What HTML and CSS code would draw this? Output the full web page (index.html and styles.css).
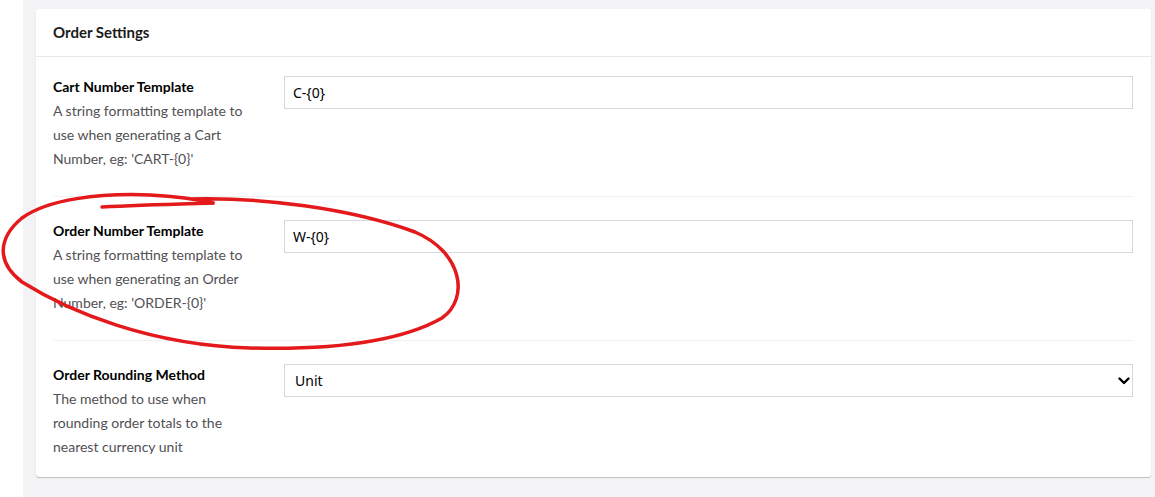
FILE: index.html
```html
<!DOCTYPE html>
<html lang="en">
<head>
    <meta charset="UTF-8">
    <meta name="viewport" content="width=device-width, initial-scale=1.0">
    <title>Order Settings</title>
    <link rel="stylesheet" href="styles.css">
</head>
<body>
    <div class="shell">
        <aside class="tree"></aside>
        <main class="editor">
            <div class="box">
                <div class="box-header">Order Settings</div>
                <div class="box-content">
                    <div class="property">
                        <div class="property-label">
                            <label for="cartNumber">Cart Number Template</label>
                            <p>A string formatting template to use when generating a Cart Number, eg: 'CART-{0}'</p>
                        </div>
                        <div class="property-editor">
                            <input type="text" id="cartNumber" value="C-{0}">
                        </div>
                    </div>

                    <div class="property">
                        <div class="property-label">
                            <label for="orderNumber">Order Number Template</label>
                            <p>A string formatting template to use when generating an Order Number, eg: 'ORDER-{0}'</p>
                        </div>
                        <div class="property-editor">
                            <input type="text" id="orderNumber" value="W-{0}">
                        </div>
                    </div>

                    <div class="property">
                        <div class="property-label">
                            <label for="rounding">Order Rounding Method</label>
                            <p>The method to use when rounding order totals to the nearest currency unit</p>
                        </div>
                        <div class="property-editor">
                            <div class="select-wrap">
                                <select id="rounding">
                                    <option selected>Unit</option>
                                    <option>Line</option>
                                    <option>Total</option>
                                </select>
                                <svg class="chevron" width="12" height="8" viewBox="0 0 12 8">
                                    <path d="M1.5 1.5 L6 6 L10.5 1.5" fill="none" stroke="#000" stroke-width="2.4" stroke-linecap="round" stroke-linejoin="round"/>
                                </svg>
                            </div>
                        </div>
                    </div>
                </div>
            </div>
        </main>
    </div>

    <!-- hand-drawn annotation over the second row -->
    <svg class="scribble" width="480" height="370" viewBox="0 0 480 370">
        <path d="M102 207 C140 205 180 204 213 203" />
        <path d="M190 199 C260 197 350 208 415 232 C462 252 470 298 442 318 C400 342 330 350 250 348 C150 345 70 312 22 282 C-4 262 -2 238 22 218 C48 199 100 193 150 195 C185 197 200 200 213 203" />
    </svg>
</body>
</html>
```

FILE: styles.css
```css
html, body {
    margin: 0;
    padding: 0;
}

body {
    font-family: "Lato", "Liberation Sans", sans-serif;
    font-size: 14px;
    color: #1b1b1b;
    background: #fff;
}

.shell {
    display: flex;
    min-height: 497px;
}

.tree {
    width: 23px;
    flex: none;
    background: #fff;
}

.editor {
    flex: 1;
    background: #f3f3f5;
    padding: 9px 4px 20px 13px;
}

.box {
    background: #fff;
    border-radius: 3px;
    box-shadow: 0 1px 1px rgba(0, 0, 0, 0.22);
}

.box-header {
    height: 47px;
    line-height: 46px;
    padding: 0 17px;
    font-size: 15px;
    font-weight: bold;
    border-bottom: 1px solid #e9e9eb;
}

.box-content {
    padding: 18px 18px 18px 17px;
}

.property {
    display: flex;
    gap: 20px;
    padding: 22px 0 25px;
    border-bottom: 1px solid #f0f0f2;
}

.property:first-child {
    padding-top: 0;
}

.property:last-child {
    border-bottom: none;
    padding-bottom: 0;
}

.property-label {
    width: 211px;
    flex: none;
    line-height: 24px;
}

.property-label label {
    display: block;
    font-weight: bold;
    color: #000;
}

.property-label p {
    margin: 0;
    color: #515054;
}

.property-editor {
    flex: 1;
    padding-top: 1px;
}

input,
select {
    box-sizing: border-box;
    width: 100%;
    height: 33px;
    border: 1px solid #d8d7d9;
    border-radius: 0;
    background: #fff;
    padding: 0 8px;
    font-family: "Noto Sans", "Open Sans", sans-serif;
    font-size: 14px;
    color: #000;
    outline: none;
}

.select-wrap {
    position: relative;
}

select {
    appearance: none;
    -webkit-appearance: none;
    padding-left: 10px;
}

.chevron {
    position: absolute;
    right: 3px;
    top: 13px;
    pointer-events: none;
}

.scribble {
    position: absolute;
    left: 0;
    top: 0;
    pointer-events: none;
}

.scribble path {
    fill: none;
    stroke: #e3191b;
    stroke-width: 3.5;
    stroke-linecap: round;
}
```
